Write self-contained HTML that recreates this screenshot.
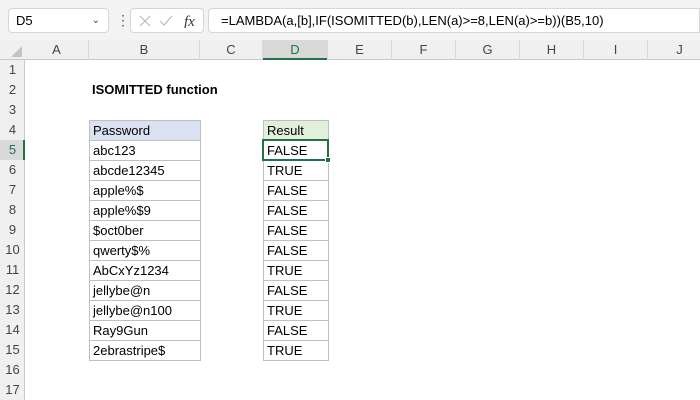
<html><head><style>
body{margin:0;width:700px;height:400px;overflow:hidden;background:#fff;font-family:"Liberation Sans",Arial,sans-serif;position:relative}
.a{position:absolute;box-sizing:border-box}
.t{font-size:13px;line-height:20px;padding-left:3px;white-space:nowrap}
.ch{font-size:13px;color:#444;text-align:center;line-height:20px}
</style></head><body>
<div class="a" style="left:0;top:0;width:700px;height:40px;background:#f3f3f3"></div>
<div class="a" style="left:8px;top:8px;width:101px;height:25px;background:#fff;border:1px solid #d6d6d6;border-radius:4px;font-size:13px;line-height:23px;padding-left:7px">D5<span style="position:absolute;right:8px;top:0;font-size:10px;color:#444">&#8964;</span></div>
<div class="a" style="left:116px;top:12px;font-size:14px;color:#555;line-height:16px">&#8942;</div>
<div class="a" style="left:130px;top:8px;width:74px;height:25px;background:#fff;border:1px solid #d6d6d6;border-radius:4px"></div>
<svg class="a" style="left:138px;top:14px" width="60" height="14"><path d="M2 2L12 12M12 2L2 12" stroke="#bbb" stroke-width="1.2"/><path d="M22 7L26 11L34 2" stroke="#bbb" stroke-width="1.2" fill="none"/><text x="46" y="12" font-family="Liberation Serif" font-style="italic" font-size="15" fill="#333">fx</text></svg>
<div class="a" style="left:208px;top:8px;width:492px;height:25px;background:#fff;border:1px solid #d6d6d6;border-radius:4px 0 0 4px;font-size:13px;line-height:23px;padding-left:12px">=LAMBDA(a,[b],IF(ISOMITTED(b),LEN(a)&gt;=8,LEN(a)&gt;=b))(B5,10)</div>
<div class="a" style="left:0;top:40px;width:700px;height:20px;background:#f0f0f0;border-bottom:1px solid #c8c8c8"></div>
<div class="a" style="left:0;top:60px;width:25px;height:340px;background:#f0f0f0;border-right:1px solid #c8c8c8"></div>
<svg class="a" style="left:9px;top:46px" width="14" height="12"><path d="M13 0L13 11L2 11Z" fill="#c4c4c4"/></svg>
<div class="a" style="left:263px;top:40px;width:65px;height:20px;background:#d9d9d9;border-bottom:2px solid #217346"></div>
<div class="a" style="left:0;top:140px;width:25px;height:20px;background:#d9d9d9;border-right:2px solid #217346"></div>
<div id="g"></div>
<script>
var cols=[["A",25,89],["B",89,200],["C",200,263],["D",263,328],["E",328,392],["F",392,456],["G",456,520],["H",520,584],["I",584,648],["J",648,712]];
var h="";
cols.forEach(c=>{h+=`<div class="a ch" style="left:${c[1]}px;top:40px;width:${c[2]-c[1]}px;height:20px;border-right:1px solid #d8d8d8;${c[0]=='D'?'color:#217346':''}">${c[0]}</div>`});
for(var r=1;r<=17;r++){var y=60+(r-1)*20;h+=`<div class="a ch" style="left:0;top:${y}px;width:25px;height:20px;${r==5?'color:#217346':''}">${r}</div>`;}
var pw=["abc123","abcde12345","apple%$","apple%$9","$oct0ber","qwerty$%","AbCxYz1234","jellybe@n","jellybe@n100","Ray9Gun","2ebrastripe$"];
var rs=["FALSE","TRUE","FALSE","FALSE","FALSE","FALSE","TRUE","FALSE","TRUE","FALSE","TRUE"];
h+=`<div class="a t" style="left:89px;top:80px;font-weight:bold">ISOMITTED function</div>`;
h+=`<div class="a t" style="left:89px;top:120px;width:112px;height:21px;background:#d9e1f2;border:1px solid #bfbfbf">Password</div>`;
h+=`<div class="a t" style="left:263px;top:120px;width:66px;height:21px;background:#e2efda;border:1px solid #bfbfbf">Result</div>`;
for(var i=0;i<11;i++){var y=140+i*20;
h+=`<div class="a t" style="left:89px;top:${y}px;width:112px;height:21px;border:1px solid #bfbfbf;line-height:19px">${pw[i]}</div>`;
h+=`<div class="a t" style="left:263px;top:${y}px;width:66px;height:21px;border:1px solid #bfbfbf;line-height:19px">${rs[i]}</div>`;}
h+=`<div class="a" style="left:262px;top:139px;width:67px;height:22px;border:2px solid #217346"></div><div class="a" style="left:325px;top:157px;width:6px;height:6px;background:#217346;border:1px solid #fff"></div>`;
document.getElementById("g").innerHTML=h;
</script>
</body></html>
